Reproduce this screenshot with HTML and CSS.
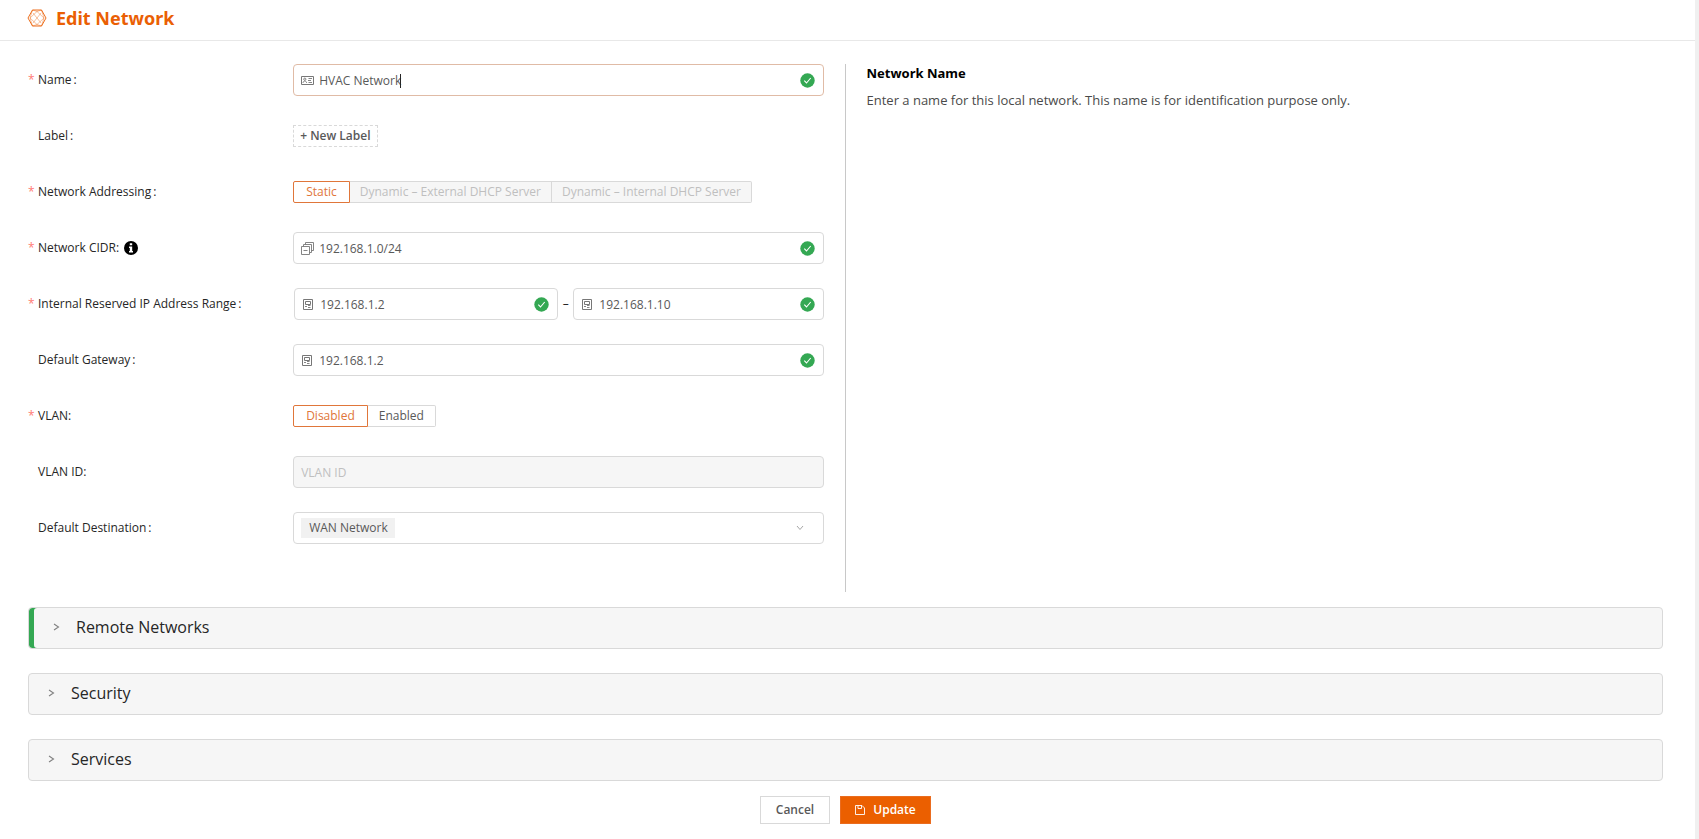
FILE: index.html
```html
<!DOCTYPE html>
<html lang="en">
<head>
<meta charset="utf-8">
<title>Edit Network</title>
<link rel="stylesheet" href="styles.css">
</head>
<body>
<svg class="sprite" aria-hidden="true">
  <symbol id="check" viewBox="0 0 15 15"><circle cx="7.5" cy="7.500" r="7.200" fill="#34a853"/><path d="M4.300 7.700l2.200 2.300 4.200-5" fill="none" stroke="#fff" stroke-width="1.100"/></symbol>
  <symbol id="idcard" viewBox="0 0 13 13"><path d="M.5 2.500h12v8H.5z" fill="none" stroke="currentColor"/><circle cx="3.800" cy="5.200" r="1.100" fill="none" stroke="currentColor" stroke-width=".9"/><path d="M2 9c0-2.600 3.600-2.600 3.600 0M7.500 4.500H11M7 6.500h3M7.500 8.500H11" fill="none" stroke="currentColor" stroke-width=".9"/></symbol>
  <symbol id="layers" viewBox="0 0 13 13"><path d="M.5 4.500h8v8h-8zM2.500 4.500v-2h8v8h-2M4.500 2.500v-2h8v8h-2M2.500 8.500h4" fill="none" stroke="currentColor" stroke-width=".9"/></symbol>
  <symbol id="address" viewBox="0 0 13 13"><path d="M1.500 1.500h9v10h-9zM3.500 3.500h5v3h-5z" fill="none" stroke="currentColor"/><path d="M3 8.500h2M6 7.500h2.500M6 9.500h2.500" fill="none" stroke="currentColor" stroke-width=".9"/></symbol>
  <symbol id="arrow" viewBox="0 0 7 10"><path d="M1 2l4.500 3L1 8" fill="none" stroke="#808080" stroke-width="1.100"/></symbol>
</svg>
<div class="page">
  <header class="header">
    <svg class="logo" viewBox="0 0 20 18" aria-hidden="true"><g fill="none" stroke="#ea5f04"><path d="M5.500 1h9L19 9l-4.500 8h-9L1 9z" stroke-width=".9"/><path d="M5.500 1L3 9l2.500 8L10 15.500 14.500 17 17 9l-2.500-8L10 2.500zM6 4l8 10M14 4L6 14M3 9l7-6.500L17 9l-7 6.500z" stroke-width=".4"/></g></svg>
    <h1>Edit Network</h1>
  </header>
  <main class="main">
    <div class="columns">
      <form class="form">
        <div class="row"><label class="label required" for="name">Name<i>:</i></label>
          <div class="field active"><svg class="lead"><use href="#idcard"/></svg><input id="name" type="text" value="HVAC Network"><span class="caret"></span><svg class="ok"><use href="#check"/></svg></div></div>
        <div class="row"><span class="label">Label<i>:</i></span><button class="new-label" type="button">+ New Label</button></div>
        <div class="row"><span class="label required">Network Addressing<i>:</i></span>
          <div class="segments" role="radiogroup" aria-label="Network Addressing">
            <label class="segment"><input type="radio" name="addressing" checked>Static</label>
            <label class="segment off"><input type="radio" name="addressing" disabled>Dynamic – External DHCP Server</label>
            <label class="segment off"><input type="radio" name="addressing" disabled>Dynamic – Internal DHCP Server</label>
          </div></div>
        <div class="row"><label class="label required tight" for="cidr">Network CIDR<i>:</i><svg class="info" viewBox="0 0 14 14"><circle cx="7" cy="7" r="7"/><path d="M5.800 2.200h2.400v2H5.800zM5 5.500h3.200V10H9v1.500H5V10h.8V7H5z" fill="#fff"/></svg></label>
          <div class="field"><svg class="lead"><use href="#layers"/></svg><input id="cidr" type="text" value="192.168.1.0/24"><svg class="ok"><use href="#check"/></svg></div></div>
        <div class="row"><label class="label required" for="from">Internal Reserved IP Address Range<i>:</i></label>
          <div class="range">
            <div class="field"><svg class="lead"><use href="#address"/></svg><input id="from" type="text" value="192.168.1.2"><svg class="ok"><use href="#check"/></svg></div>
            <span class="dash">–</span>
            <div class="field"><svg class="lead"><use href="#address"/></svg><input type="text" aria-label="Range end" value="192.168.1.10"><svg class="ok"><use href="#check"/></svg></div>
          </div></div>
        <div class="row"><label class="label" for="gateway">Default Gateway<i>:</i></label>
          <div class="field"><svg class="lead"><use href="#address"/></svg><input id="gateway" type="text" value="192.168.1.2"><svg class="ok"><use href="#check"/></svg></div></div>
        <div class="row"><span class="label required tight">VLAN<i>:</i></span>
          <div class="segments" role="radiogroup" aria-label="VLAN">
            <label class="segment"><input type="radio" name="vlan" checked>Disabled</label>
            <label class="segment"><input type="radio" name="vlan">Enabled</label>
          </div></div>
        <div class="row"><label class="label tight" for="vlan-id">VLAN ID<i>:</i></label>
          <div class="field disabled"><input id="vlan-id" type="text" placeholder="VLAN ID" disabled></div></div>
        <div class="row"><label class="label" for="destination">Default Destination<i>:</i></label>
          <div class="field picker"><select id="destination"><option>WAN Network</option></select><svg class="chevron" viewBox="0 0 10 8"><path d="M2 2l3 3.500L8 2" fill="none" stroke="#a6a6a6"/></svg></div></div>
      </form>
      <aside class="help">
        <h2>Network Name</h2>
        <p>Enter a name for this local network. This name is for identification purpose only.</p>
      </aside>
    </div>
    <div class="panels">
      <button class="panel done" type="button"><svg><use href="#arrow"/></svg>Remote Networks</button>
      <button class="panel" type="button"><svg><use href="#arrow"/></svg>Security</button>
      <button class="panel" type="button"><svg><use href="#arrow"/></svg>Services</button>
    </div>
    <div class="actions">
      <button class="btn" type="button">Cancel</button>
      <button class="btn primary" type="button"><svg viewBox="0 0 10 10"><path d="M.5.5h6.500L9.500 3v6.500h-9zM3 .5v3h3.500v-3" fill="none" stroke="currentColor" stroke-width=".9"/></svg>Update</button>
    </div>
  </main>
</div>
</body>
</html>
```

FILE: styles.css
```css
* { box-sizing: border-box; }
body { margin: 0; background: #f0f0f0; font-family: "Open Sans", "Noto Sans", sans-serif; font-size: 12px; line-height: 20px; color: #262626; }
button, input, select { font: inherit; color: inherit; }
.sprite { display: none; }
.page { min-height: 100vh; margin-right: 4px; background: #fff; }
.header { display: flex; align-items: center; gap: 9px; height: 41px; padding: 0 27px 5px; border-bottom: 1px solid #e8e8e8; }
.logo { width: 20px; height: 18px; }
h1 { margin: 0; font-family: "Noto Sans", sans-serif; font-size: 18px; line-height: 24px; font-weight: 700; color: #ea5f04; }
.main { padding: 23px 32px 15px 28px; }
.columns { display: grid; grid-template-columns: 1fr 1fr; min-height: 528px; }
.form { display: flex; flex-direction: column; gap: 24px; padding-right: 21px; border-right: 1px solid #c8c8c8; }
.row { display: grid; grid-template-columns: 1fr 2fr; align-items: center; justify-items: start; height: 32px; }
.label { display: flex; align-items: center; padding-left: 10px; white-space: nowrap; }
.label i { margin-left: 2px; font-style: normal; }
.label.tight i { margin-left: 0; }
.label.required { padding-left: 0; }
.label.required::before { content: "*"; width: 10px; color: #ff7b75; }
.info { width: 14px; height: 14px; margin-left: 5px; }
.field { position: relative; display: flex; align-items: center; gap: 5px; width: 100%; height: 32px; padding: 0 8px 0 7px; border: 1px solid #d9d9d9; border-radius: 4px; color: #595959; }
.field.active { border-color: #e0bba6; }
.field.disabled { background: #f6f6f6; }
.field input { flex: 1; min-width: 0; padding: 2px 0 0; border: 0; outline: 0; background: transparent; }
.field input::placeholder { color: #bfbfbf; }
.lead { flex: none; width: 13px; height: 13px; color: #777; }
.ok { flex: none; width: 15px; height: 15px; }
.caret { position: absolute; left: 106px; top: 9px; width: 1px; height: 14px; background: #262626; }
.range { display: flex; align-items: center; width: 100%; padding-left: 1px; }
.range .field:first-child { flex: 53; }
.range .field:last-child { flex: 50; }
.dash { width: 15px; text-align: center; }
.new-label { height: 22px; padding: 0 6px; border: 1px dashed #d9d9d9; background: #fff; line-height: 20px; font-weight: 600; color: #595959; }
.segments { display: flex; height: 22px; }
.segment { display: flex; align-items: center; padding: 0 12px; border: 1px solid #d9d9d9; color: #595959; white-space: nowrap; }
.segment + .segment { border-left: 0; padding: 0 11px; }
.segment:first-child { border-radius: 2px 0 0 2px; }
.segment:last-child { border-radius: 0 2px 2px 0; }
.segment + .segment.off { padding: 0 10px; background: #f6f6f6; color: #bfbfbf; }
.segment:has(:checked) { border-color: #e0763a; color: #e0763a; }
.segment input { appearance: none; width: 0; margin: 0; }
.picker { padding: 0; }
.picker select { appearance: none; flex: 1; height: 30px; padding: 0 15px; border: 0; outline: 0; background: linear-gradient(#f1f1f1, #f1f1f1) 7px 5px / 94px 20px no-repeat; }
.chevron { position: absolute; right: 18px; width: 10px; height: 8px; pointer-events: none; }
.help { padding-left: 21px; }
.help h2 { margin: 0 0 8px; font-family: "Noto Sans", sans-serif; font-size: 13px; line-height: 18px; font-weight: 700; color: #000; }
.help p { margin: 0; font-size: 13px; line-height: 20px; color: #4a4a4a; }
.panels { display: flex; flex-direction: column; gap: 24px; margin-top: 15px; }
.panel { display: flex; align-items: center; gap: 16px; height: 42px; padding: 0 19px 2px; border: 1px solid #d9d9d9; border-radius: 4px; background: #f6f6f6; font-size: 16px; color: #262626; }
.panel svg { width: 7px; height: 10px; }
.panel.done { box-shadow: inset 5px 0 #34a853; padding-left: 24px; }
.actions { display: flex; justify-content: center; gap: 10px; margin-top: 15px; }
.btn { display: flex; align-items: center; justify-content: center; gap: 8px; width: 70px; height: 28px; padding: 0; border: 1px solid #d9d9d9; background: #fff; font-weight: 600; color: #595959; }
.btn.primary { width: 91px; border-color: #ea6c1f; background: #eb5f00; color: #fff; }
.btn svg { width: 10px; height: 10px; }
```
